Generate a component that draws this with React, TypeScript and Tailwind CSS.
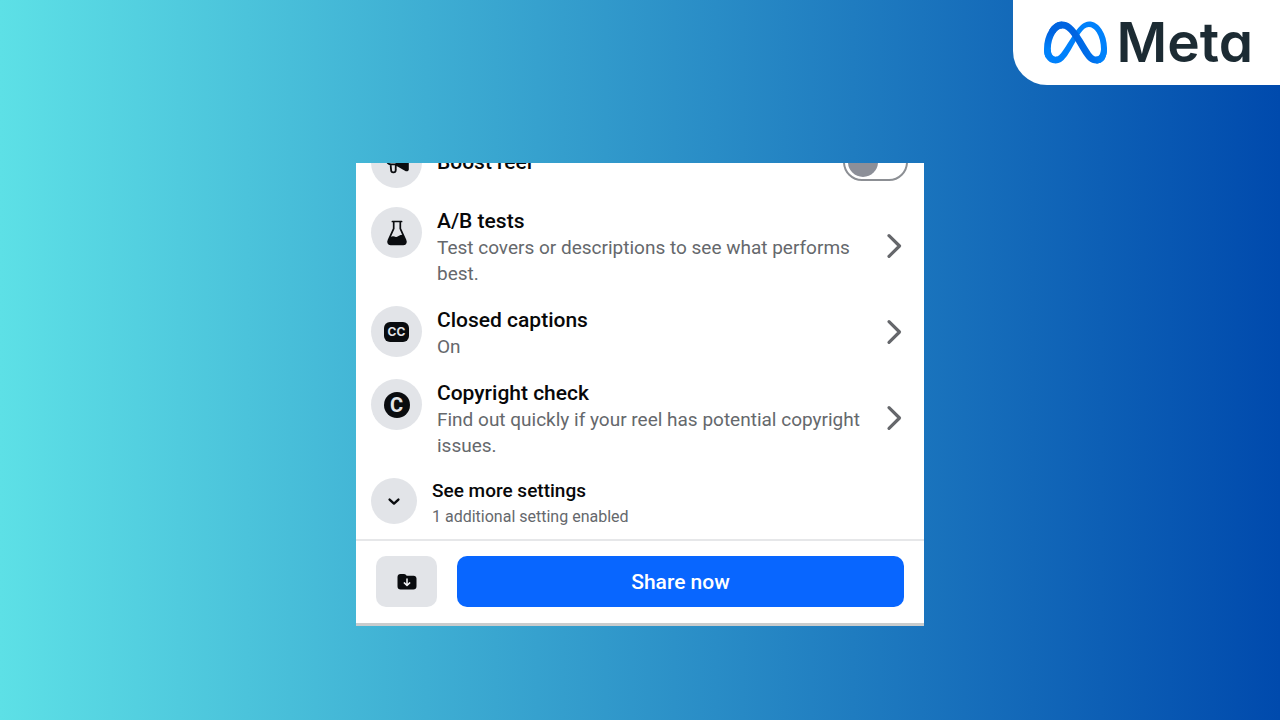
import type { ReactNode } from "react";

function MetaMark() {
  return (
    <svg viewBox="0 0 287.56 191" className="h-[43px] w-[63px] shrink-0" aria-hidden="true">
      <defs>
        <linearGradient id="ribbon" gradientUnits="userSpaceOnUse" x1="62.34" y1="101.45" x2="260.34" y2="91.45">
          <stop offset="0" stopColor="#0064e1" />
          <stop offset="0.4" stopColor="#0064e1" />
          <stop offset="0.83" stopColor="#0073ee" />
          <stop offset="1" stopColor="#0082fb" />
        </linearGradient>
        <linearGradient id="fold" gradientUnits="userSpaceOnUse" x1="41.42" y1="126" x2="41.42" y2="53">
          <stop offset="0" stopColor="#0082fb" />
          <stop offset="1" stopColor="#0064e0" />
        </linearGradient>
      </defs>
      <path
        fill="#0081fb"
        d="M31.06,126c0,11,2.41,19.41,5.56,24.51A19,19,0,0,0,53.19,160c8.1,0,15.51-2,29.79-21.76,11.44-15.83,24.92-38,34-52l15.36-23.6c10.67-16.39,23-34.61,37.18-47C181.07,5.6,193.54,0,206.09,0c21.07,0,41.14,12.21,56.5,35.11,16.81,25.08,25,56.67,25,89.27,0,19.38-3.82,33.62-10.32,44.87C271,180.13,258.72,191,238.13,191V160c17.63,0,22-16.2,22-34.74,0-26.42-6.16-55.74-19.73-76.69-9.63-14.86-22.11-23.94-35.84-23.94-14.85,0-26.8,11.2-40.23,31.17-7.14,10.61-14.47,23.54-22.7,38.13l-9.06,16c-18.2,32.27-22.81,39.62-31.91,51.75C84.74,183,71.12,191,53.19,191c-21.27,0-34.72-9.21-43-23.09C3.34,156.6,0,141.76,0,124.85Z"
      />
      <path
        fill="url(#ribbon)"
        d="M24.49,37.3C38.73,15.35,59.28,0,82.85,0c13.65,0,27.22,4,41.39,15.61,15.5,12.65,32,33.48,52.63,67.81l7.39,12.32c17.84,29.72,28,45,33.93,52.22,7.64,9.26,13,12,19.94,12,17.63,0,22-16.2,22-34.74l27.4-.86c0,19.38-3.82,33.62-10.32,44.87C271,180.13,258.72,191,238.13,191c-12.8,0-24.14-2.78-36.68-14.61-9.64-9.08-20.91-25.21-29.58-39.71L146.08,93.6c-12.94-21.62-24.81-37.74-31.68-45C107,40.71,97.51,31.23,82.35,31.23c-12.27,0-22.69,8.61-31.41,21.78Z"
      />
      <path
        fill="url(#fold)"
        d="M82.35,31.23c-12.27,0-22.69,8.61-31.41,21.78C38.61,71.62,31.06,99.34,31.06,126c0,11,2.41,19.41,5.56,24.51L10.14,167.91C3.34,156.6,0,141.76,0,124.85,0,94.1,8.44,62.05,24.49,37.3,38.73,15.35,59.28,0,82.85,0Z"
      />
    </svg>
  );
}

function MegaphoneIcon() {
  return (
    <svg viewBox="0 0 24 24" className="size-6" aria-hidden="true">
      <path fill="#0a0c0f" d="M10.500 4.500 20.500.8c1.600-.6 3.300.2 3.300 1.700v17c0 1.500-1.500 2.200-3 1.700L12.500 16.500l-2-.8z" />
      <path
        fill="none"
        stroke="#0a0c0f"
        strokeWidth="1.800"
        strokeLinejoin="round"
        d="M10.500 5H6.200a4.700 4.700 0 0 0 0 9.400H11M5.600 14.600l.5 5.600a2.300 2.300 0 0 0 4.600-.3l.1-5.300"
      />
    </svg>
  );
}

function FlaskIcon() {
  return (
    <svg viewBox="0 0 24 26" className="h-[26px] w-6" aria-hidden="true">
      <path
        fill="none"
        stroke="#0a0c0f"
        strokeWidth="1.7"
        strokeLinecap="round"
        strokeLinejoin="round"
        d="M7.4 1.500H16.600M8.700 1.500V8.700L3.500 20.200C2.500 22.500 3.500 24.500 5.600 24.500H18.400C20.500 24.500 21.500 22.500 20.500 20.200L15.300 8.700V1.500"
      />
      <path
        fill="#0a0c0f"
        d="M5 17.200C7.300 15.900 9 16.300 10.800 16.900C13 17.500 14.200 14.600 18 14.800L20.800 20.400C21.800 22.800 20.700 25 18.400 25H5.700C3.300 25 2.300 22.800 3.200 20.600Z"
      />
    </svg>
  );
}

function FolderDownIcon() {
  return (
    <svg viewBox="0 0 20 18" className="h-[18px] w-5" aria-hidden="true">
      <path
        fill="#0a0c0f"
        d="M3.500 1h3.300c1 0 1.700.4 2.300 1.100l.5.600h7c1.700 0 2.900 1.200 2.900 2.900v7.700c0 2.100-1.200 3.200-3.200 3.200H3.700c-2 0-3.200-1.100-3.200-3.200V4c0-1.800 1.200-3 3-3z"
      />
      <path
        fill="none"
        stroke="#f4f5f7"
        strokeWidth="1.500"
        strokeLinecap="round"
        strokeLinejoin="round"
        d="M10 6v6.300M7.300 9.900l2.700 2.600 2.700-2.600"
      />
    </svg>
  );
}

function ChevronRight() {
  return (
    <svg viewBox="0 0 24 28" className="h-7 w-6 shrink-0" aria-hidden="true">
      <path
        fill="none"
        stroke="#65676b"
        strokeWidth="3.200"
        strokeLinecap="round"
        strokeLinejoin="round"
        d="M5 2.700 15.500 13 5 23.300"
      />
    </svg>
  );
}

function IconBubble({ children }: { children: ReactNode }) {
  return (
    <span className="flex size-[51px] shrink-0 items-center justify-center rounded-full bg-[#e2e4e8]">{children}</span>
  );
}

type SettingRowProps = { icon: ReactNode; title: string; detail: string };

function SettingRow({ icon, title, detail }: SettingRowProps) {
  return (
    <li>
      <button type="button" className="flex w-full items-center gap-3 text-left">
        <span className="flex flex-1 items-start gap-[15px]">
          <IconBubble>{icon}</IconBubble>
          <span className="flex-1">
            <span className="block text-[21px] leading-[28px] font-medium text-[#080809]">{title}</span>
            <span className="block text-[19px] leading-[26px] text-[#65686c]">{detail}</span>
          </span>
        </span>
        <ChevronRight />
      </button>
    </li>
  );
}

export default function App() {
  return (
    <div className="flex min-h-screen flex-col bg-linear-to-r/srgb from-[#5de0e6] to-[#004aad] font-['Roboto',sans-serif]">
      <header className="flex items-center gap-[10px] self-end rounded-bl-[34px] bg-white py-[10px] pr-[27px] pl-[31px]">
        <MetaMark />
        <span className="font-['Inter',sans-serif] text-[55px] leading-[65px] font-semibold text-[#1c2b33] [font-feature-settings:'cv11']">
          Meta
        </span>
      </header>

      <main className="flex justify-center px-4 pt-[78px] pb-10">
        <section className="w-full max-w-[568px] overflow-hidden border-b-3 border-[#c9cccd] bg-white">
          <ul className="-mt-[27px] flex flex-col gap-[19px] pr-4 pb-[11px] pl-[15px]">
            <li>
              <label className="flex h-[52px] items-center gap-[15px]">
                <IconBubble>
                  <MegaphoneIcon />
                </IconBubble>
                <span className="flex-1 text-[21px] leading-[28px] font-medium text-[#080809]">Boost reel</span>
                <input type="checkbox" role="switch" className="peer sr-only" />
                <span className="flex h-[38px] w-[65px] items-center rounded-full border-2 border-[#8c8f94] px-[3px] peer-checked:justify-end">
                  <span className="size-[30px] rounded-full bg-[#8c8f98]" />
                </span>
              </label>
            </li>
            <SettingRow
              icon={<FlaskIcon />}
              title="A/B tests"
              detail="Test covers or descriptions to see what performs best."
            />
            <SettingRow
              icon={
                <span className="flex h-5 w-[25px] items-center justify-center rounded-md bg-[#0a0c0f] font-['Inter',sans-serif] text-[12px] leading-[20px] font-bold text-[#e2e4e8]">
                  CC
                </span>
              }
              title="Closed captions"
              detail="On"
            />
            <SettingRow
              icon={
                <span className="flex size-[26px] items-center justify-center rounded-full bg-[#0a0c0f] font-['Roboto',sans-serif] text-[20px] leading-[26px] font-bold text-[#e2e4e8]">
                  C
                </span>
              }
              title="Copyright check"
              detail="Find out quickly if your reel has potential copyright issues."
            />
            <li>
              <button type="button" className="flex w-full items-start gap-[15px] text-left">
                <span className="flex size-[46px] shrink-0 items-center justify-center rounded-full bg-[#e2e4e8]">
                  <svg viewBox="0 0 16 16" className="size-4" aria-hidden="true">
                    <path
                      fill="none"
                      stroke="#0a0c0f"
                      strokeWidth="2.400"
                      strokeLinecap="round"
                      strokeLinejoin="round"
                      d="M3.600 6.600 8 10.600l4.400-4"
                    />
                  </svg>
                </span>
                <span className="flex-1">
                  <span className="block text-[19px] leading-[26px] font-medium text-[#080809]">See more settings</span>
                  <span className="block text-[16px] leading-[26px] text-[#65686c]">1 additional setting enabled</span>
                </span>
              </button>
            </li>
          </ul>

          <footer className="-mt-[2px] flex gap-5 border-t-2 border-[#e6e7e9] px-5 pt-[15px] pb-4">
            <button
              type="button"
              aria-label="Save as draft"
              className="flex h-[51px] w-[61px] items-center justify-center rounded-[10px] bg-[#e2e4e8]"
            >
              <FolderDownIcon />
            </button>
            <button
              type="button"
              className="h-[51px] flex-1 rounded-[10px] bg-[#0866ff] text-[21px] leading-[28px] font-medium text-white"
            >
              Share now
            </button>
          </footer>
        </section>
      </main>
    </div>
  );
}
